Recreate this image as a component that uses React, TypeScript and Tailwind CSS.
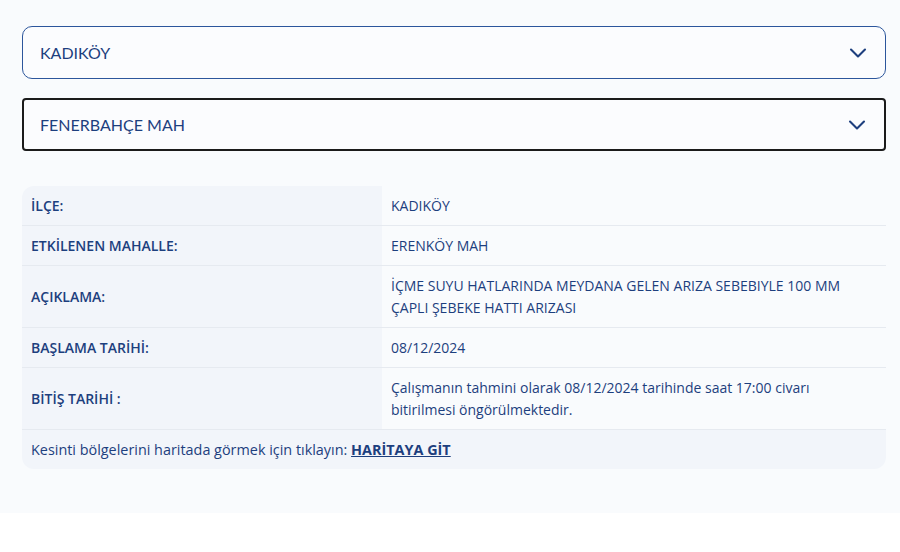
import { ChevronDown } from "lucide-react";

const rows: Array<{ label: string; value: string }> = [
  { label: "İLÇE:", value: "KADIKÖY" },
  { label: "ETKİLENEN MAHALLE:", value: "ERENKÖY MAH" },
  {
    label: "AÇIKLAMA:",
    value: "İÇME SUYU HATLARINDA MEYDANA GELEN ARIZA SEBEBIYLE 100 MM ÇAPLI ŞEBEKE HATTI ARIZASI",
  },
  { label: "BAŞLAMA TARİHİ:", value: "08/12/2024" },
  {
    label: "BİTİŞ TARİHİ :",
    value: "Çalışmanın tahmini olarak 08/12/2024 tarihinde saat 17:00 civarı bitirilmesi öngörülmektedir.",
  },
];

function Select({ value, variant }: { value: string; variant: "blue" | "dark" }) {
  return (
    <div
      className={`flex h-[53px] items-center justify-between pr-[13px] text-[16px] text-[#1d3f7e] ${
        variant === "blue"
          ? "rounded-[10px] border border-[#2c569c] pl-[17px]"
          : "rounded-[4px] border-2 border-[#1b1b1b] pl-[16px]"
      } bg-[#fbfcfe]`}
    >
      <span>{value}</span>
      <ChevronDown className="size-[28px] text-[#1d3f7e]" strokeWidth={1.8} />
    </div>
  );
}

export default function App() {
  return (
    <div className="bg-white" style={{ fontFamily: "Lato, 'Noto Sans', sans-serif" }}>
      <div className="flex flex-col bg-[#f9fbfd] pb-[44px] pl-[22px] pr-[14px] pt-[26px]">
        <div className="flex flex-col gap-[19px]">
          <Select value="KADIKÖY" variant="blue" />
          <Select value="FENERBAHÇE MAH" variant="dark" />
        </div>

        <div
          className="mt-[35px] overflow-hidden rounded-[12px] bg-[#f9fbfd] text-[14px] leading-[22px] text-[#1d3f7e]"
          style={{ fontFamily: "'Open Sans', Lato, sans-serif" }}
        >
          {rows.map((row) => (
            <div key={row.label} className="grid grid-cols-[360px_1fr] border-b border-[#e6eaf0]">
              <div className="flex items-center bg-[#f2f5fa] px-[9px] pb-[8px] pt-[9px] font-semibold">
                {row.label}
              </div>
              <div className="flex items-center pb-[8px] pl-[9px] pr-[24px] pt-[9px]">{row.value}</div>
            </div>
          ))}
          <div className="bg-[#f2f5fa] px-[9px] pb-[8px] pt-[9px] text-[14.4px] font-medium">
            Kesinti bölgelerini haritada görmek için tıklayın:{" "}
            <a href="#" className="font-bold underline">
              HARİTAYA GİT
            </a>
          </div>
        </div>
      </div>
    </div>
  );
}
